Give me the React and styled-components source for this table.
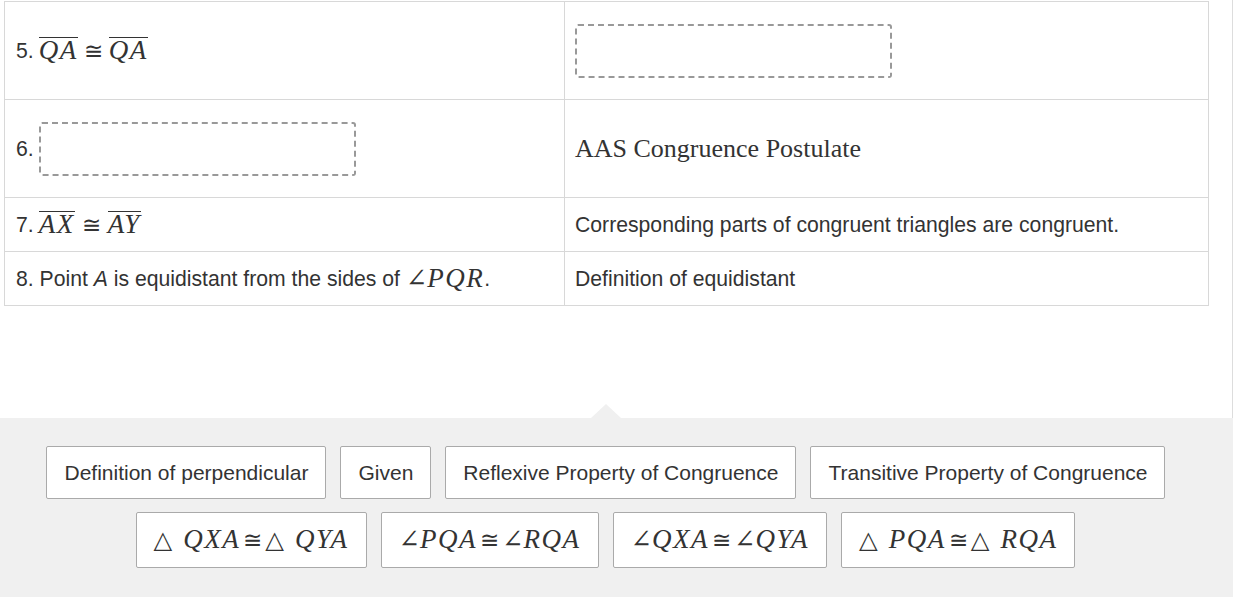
import styled, { createGlobalStyle } from 'styled-components'

const GlobalStyle = createGlobalStyle`
  body {
    margin: 0;
    background: #fff;
    font-family: "Liberation Sans", Arial, sans-serif;
    color: #333;
  }
`

const Page = styled.div`
  width: 1233px;
`

const Main = styled.div`
  height: 418px;
  padding: 1px 0 0 4px;
  box-sizing: border-box;
  border-right: 1px solid #ddd;
`

const Table = styled.div`
  width: 1203px;
  display: grid;
  grid-template-columns: 559px 1fr;
  border: 1px solid #d8d8d8;
  border-bottom: none;
`

const Cell = styled.div`
  display: flex;
  align-items: center;
  padding: 12px 10px 12px ${p => (p.$right ? '10px' : '11px')};
  font-size: 21.2px;
  line-height: 29px;
  border-bottom: 1px solid #d8d8d8;
  border-left: ${p => (p.$right ? '1px solid #d8d8d8' : 'none')};
  white-space: nowrap;
`

const Drop = styled.div`
  width: 313px;
  height: 50px;
  margin: 9.5px 0;
  border: 2px dashed #999;
  border-radius: 3px;
`

const Num = styled.span`
  margin-right: 5px;
`

const Math = styled.span`
  font-family: "Liberation Serif", "DejaVu Serif", serif;
  font-size: 27px;
  line-height: 1;
  white-space: nowrap;
`

const Var = styled.i`
  font-style: italic;
  font-family: "Liberation Serif", serif;
  letter-spacing: 1.5px;
`

const Rel = styled.span`
  font-family: "DejaVu Serif", serif;
  font-size: 0.86em;
  margin: 0 ${p => p.$m || '6px'};
`

const Sym = styled.span`
  font-family: "DejaVu Serif", serif;
  font-size: ${p => p.$size || '0.95em'};
  margin-right: ${p => p.$gap || '0px'};
`

const Bar = styled.span`
  display: inline-block;
  border-top: 1.5px solid #333;
  line-height: 22px;
  padding-top: 1px;
`

const SerifText = styled.span`
  font-family: "Liberation Serif", serif;
  font-size: 26px;
`

const Tray = styled.div`
  position: relative;
  background: #f0f0f0;
  padding: 28px 22px 29px 0;
  display: flex;
  flex-wrap: wrap;
  justify-content: center;
  gap: 13px 14px;

  &::before {
    content: '';
    position: absolute;
    left: 591px;
    top: -14px;
    border-left: 15px solid transparent;
    border-right: 15px solid transparent;
    border-bottom: 14px solid #f0f0f0;
  }
`

const Row = styled.div`
  display: flex;
  justify-content: center;
  gap: 14px;
  width: 100%;
`

const Chip = styled.div`
  background: #fff;
  border: 1px solid #aaa;
  border-radius: 2px;
  padding: ${p => (p.$math ? '13px 17px 12px' : '14px 16.5px 13px 17.5px')};
  font-size: 21px;
  line-height: ${p => (p.$math ? '28px' : '24px')};
  white-space: nowrap;
`

const Over = ({ children }) => <Bar><Var>{children}</Var></Bar>

const Ang = ({ v }) => (
  <>
    <Sym>∠</Sym><Var>{v}</Var>
  </>
)

const Tri = ({ v }) => (
  <>
    <Sym $gap="11px" $size="0.9em">△</Sym><Var>{v}</Var>
  </>
)

const App = () => {
  return (
    <Page>
      <GlobalStyle />
      <Main>
        <Table>
          <Cell>
            <Num>5.</Num>
            <Math><Over>QA</Over><Rel>≅</Rel><Over>QA</Over></Math>
          </Cell>
          <Cell $right>
            <Drop />
          </Cell>

          <Cell>
            <Num>6.</Num>
            <Drop />
          </Cell>
          <Cell $right>
            <SerifText>AAS Congruence Postulate</SerifText>
          </Cell>

          <Cell>
            <Num>7.</Num>
            <Math><Over>AX</Over><Rel $m="7px">≅</Rel><Over>AY</Over></Math>
          </Cell>
          <Cell $right>Corresponding parts of congruent triangles are congruent.</Cell>

          <Cell>
            8. Point&nbsp;<i>A</i>&nbsp;is equidistant from the sides of&nbsp;
            <Math><Ang v="PQR" /></Math>.
          </Cell>
          <Cell $right>Definition of equidistant</Cell>
        </Table>
      </Main>

      <Tray>
        <Row>
          <Chip>Definition of perpendicular</Chip>
          <Chip>Given</Chip>
          <Chip>Reflexive Property of Congruence</Chip>
          <Chip>Transitive Property of Congruence</Chip>
        </Row>
        <Row>
          <Chip $math><Math><Tri v="QXA" /><Rel $m="3px">≅</Rel><Tri v="QYA" /></Math></Chip>
          <Chip $math><Math><Ang v="PQA" /><Rel $m="3px">≅</Rel><Ang v="RQA" /></Math></Chip>
          <Chip $math><Math><Ang v="QXA" /><Rel $m="3px">≅</Rel><Ang v="QYA" /></Math></Chip>
          <Chip $math><Math><Tri v="PQA" /><Rel $m="3px">≅</Rel><Tri v="RQA" /></Math></Chip>
        </Row>
      </Tray>
    </Page>
  )
}

export default App
